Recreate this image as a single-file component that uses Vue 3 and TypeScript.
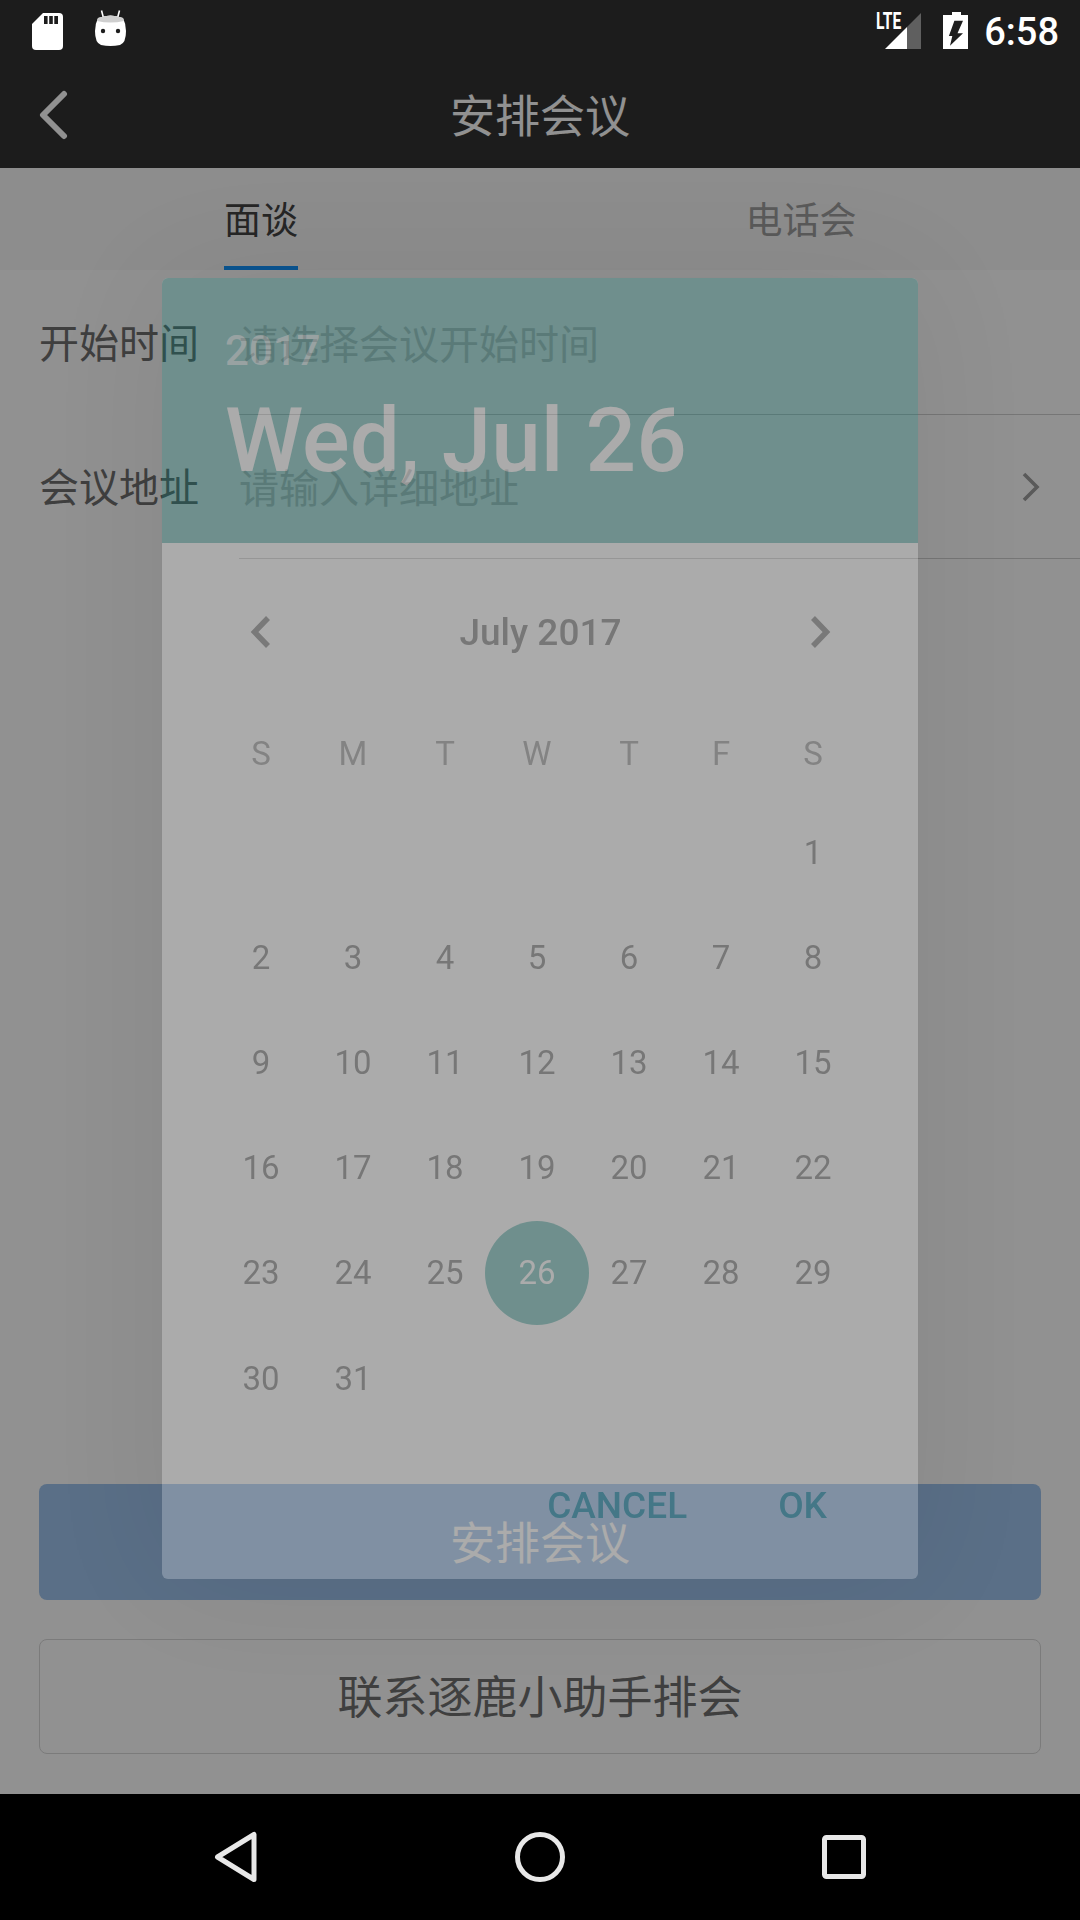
<script setup lang="ts">
const weekdays: string[] = ['S', 'M', 'T', 'W', 'T', 'F', 'S']
const blanks: number[] = [1, 2, 3, 4, 5, 6]
const days: number[] = Array.from({ length: 31 }, (_, i) => i + 1)
const selected = 26
</script>

<template>
  <div class="page">
    <div class="top">
      <div class="status">
        <svg class="sd" width="31" height="37" viewBox="0 0 31 37">
          <path d="M11 0H27a4 4 0 0 1 4 4V33a4 4 0 0 1-4 4H4a4 4 0 0 1-4-4V11Z" fill="#fff" />
          <path d="M12 3h3.6v8H12zM17.2 3h3.6v8h-3.6zM22.3 3h3.7v8h-3.7z" fill="#1d1d1d" />
        </svg>
        <svg class="droid" width="31" height="37" viewBox="0 0 31 37">
          <path d="M6.5 0.5L8.5 8M24.5 0.5L22.5 8" stroke="#fff" stroke-width="1.6" fill="none" />
          <path d="M3 8Q15.5 3 28 8Q31 14 31 21Q31 33 25 35Q15.5 37 6 35Q0 33 0 21Q0 14 3 8Z" fill="#fff" />
          <path d="M3 8Q15.5 3 28 8L29 11Q15.5 14 2 11Z" fill="#cfcfcf" />
          <circle cx="8" cy="21" r="2.2" fill="#1d1d1d" />
          <circle cx="23" cy="21" r="2.2" fill="#1d1d1d" />
        </svg>
        <div class="signal">
          <svg width="45" height="36" viewBox="0 0 45 36">
            <path d="M9 36L31 14V36Z" fill="#fff" />
            <path d="M31 14L45 0V36H31Z" fill="#5f5f5f" />
          </svg>
          <span class="lte">LTE</span>
        </div>
        <svg class="battery" width="25" height="37" viewBox="0 0 25 37">
          <path d="M9 0H18V3H25V37H0V3H9Z" fill="#fff" />
          <path d="M20 8.7L14.5 21.3H20L7 33.7L9.3 24H5.9L11.4 8.7Z" fill="#1d1d1d" />
        </svg>
        <span class="time">6:58</span>
      </div>
      <div class="toolbar">
        <svg class="back" width="30" height="50" viewBox="0 0 30 50">
          <path d="M26 4L5 25L26 46" fill="none" stroke="#fff" stroke-width="6" stroke-linecap="round" stroke-linejoin="round" />
        </svg>
        <span class="title">安排会议</span>
        <span></span>
      </div>
    </div>

    <div class="tabs">
      <div class="tab active"><span class="tab-label">面谈</span></div>
      <div class="tab"><span class="tab-label">电话会</span></div>
    </div>

    <main class="main">
      <div class="row">
        <span class="label">开始时间</span>
        <div class="field"><span class="placeholder">请选择会议开始时间</span></div>
      </div>
      <div class="row">
        <span class="label">会议地址</span>
        <div class="field">
          <span class="placeholder">请输入详细地址</span>
          <svg class="row-arrow" width="18" height="30" viewBox="0 0 18 30">
            <path d="M2 2L15 15L2 28" fill="none" stroke="#9e9e9e" stroke-width="3.6" />
          </svg>
        </div>
      </div>
      <div class="actions-main">
        <button class="btn primary"><span>安排会议</span></button>
        <button class="btn outline"><span>联系逐鹿小助手排会</span></button>
      </div>
    </main>

    <nav class="navbar">
      <div class="nav-cell">
        <svg width="44" height="52" viewBox="0 0 44 52">
          <path d="M40 3.5V48.5L3.5 26Z" fill="none" stroke="#e8e8e8" stroke-width="5" stroke-linejoin="round" />
        </svg>
      </div>
      <div class="nav-cell">
        <svg width="50" height="50" viewBox="0 0 50 50">
          <circle cx="25" cy="25" r="22.5" fill="none" stroke="#e8e8e8" stroke-width="5" />
        </svg>
      </div>
      <div class="nav-cell">
        <svg width="44" height="44" viewBox="0 0 44 44">
          <rect x="2.5" y="2.5" width="39" height="39" rx="2" fill="none" stroke="#e8e8e8" stroke-width="5" />
        </svg>
      </div>
    </nav>

    <div class="scrim"></div>

    <section class="dialog">
      <header class="d-head">
        <div class="year">2017</div>
        <div class="date">Wed, Jul 26</div>
      </header>
      <div class="month-row">
        <svg width="21" height="34" viewBox="0 0 21 34">
          <path d="M18 3L4.5 17L18 31" fill="none" stroke="#2a2a2a" stroke-width="5.5" />
        </svg>
        <span class="month">July 2017</span>
        <svg width="21" height="34" viewBox="0 0 21 34">
          <path d="M3 3L16.5 17L3 31" fill="none" stroke="#2a2a2a" stroke-width="5.5" />
        </svg>
      </div>
      <div class="weekdays">
        <span v-for="(d, i) in weekdays" :key="i">{{ d }}</span>
      </div>
      <div class="days">
        <span v-for="b in blanks" :key="'b' + b"></span>
        <span v-for="d in days" :key="d" class="day" :class="{ selected: d === selected }">{{ d }}</span>
      </div>
      <footer class="d-actions">
        <span>CANCEL</span>
        <span>OK</span>
      </footer>
    </section>
  </div>
</template>

<style scoped>
.page {
  position: relative;
  width: 1080px;
  height: 1920px;
  display: flex;
  flex-direction: column;
  overflow: hidden;
  background: #fff;
  font-family: "Noto Sans CJK SC", "Roboto", sans-serif;
}
.top {
  background: #323232;
  flex: none;
}
.status {
  position: relative;
  z-index: 2;
  height: 75px;
  display: flex;
  align-items: flex-start;
  padding: 0 21px 0 32px;
  box-sizing: border-box;
}
.sd { margin-top: 13px; }
.droid { margin: 10px 0 0 32px; }
.signal {
  position: relative;
  margin: 13px 0 0 auto;
  height: 36px;
}
.lte {
  position: absolute;
  left: 0;
  top: -3px;
  font: 700 23px/23px "Roboto", sans-serif;
  color: #fff;
  transform: scaleX(0.68);
  transform-origin: left top;
}
.battery { margin: 12px 0 0 22px; }
.time {
  margin: 9px 0 0 16px;
  font: 500 38px/46px "Roboto", sans-serif;
  color: #fff;
}
.toolbar {
  height: 93px;
  box-sizing: border-box;
  display: grid;
  grid-template-columns: 1fr auto 1fr;
  align-items: center;
  padding: 0 38px 16px;
}
.back { display: block; margin-top: 2px; }
.title {
  font-size: 45px;
  line-height: 60px;
  color: #fff;
}
.tabs {
  flex: none;
  height: 102px;
  display: grid;
  grid-template-columns: 540px 540px;
  background: #f8f8f8;
}
.tab {
  padding-right: 18px;
  display: flex;
  justify-content: center;
  color: #9e9e9e;
}
.tab-label {
  height: 102px;
  box-sizing: border-box;
  font-size: 37px;
  line-height: 50px;
  padding-top: 25px;
}
.tab.active { color: #444; }
.tab.active .tab-label { border-bottom: 4px solid #1295fd; }
.main {
  flex: 1;
  display: flex;
  flex-direction: column;
}
.row {
  display: flex;
  height: 144px;
  padding-left: 39px;
}
.label {
  width: 200px;
  flex: none;
  font-size: 40px;
  line-height: 142px;
  color: #6f6f6f;
}
.field {
  flex: 1;
  display: flex;
  align-items: center;
  justify-content: space-between;
  padding-right: 40px;
  border-bottom: 1.5px solid #cfcfcf;
  margin-bottom: -1px;
}
.placeholder {
  font-size: 40px;
  color: #d0d0d0;
}
.row-arrow { display: block; margin-top: 1px; }
.actions-main {
  margin-top: auto;
  padding: 0 39px 40px;
  display: flex;
  flex-direction: column;
  gap: 39px;
}
.btn {
  height: 116px;
  border-radius: 8px;
  font-family: inherit;
  font-size: 45px;
  padding: 0 0 4px;
}
.primary {
  border: none;
  background: #9ec3ed;
  color: #fff;
}
.outline {
  height: 115px;
  border: 1.5px solid #d8d8d8;
  background: transparent;
  color: #707070;
}
.navbar {
  flex: none;
  height: 126px;
  background: #000;
  display: flex;
  justify-content: center;
  align-items: center;
  position: relative;
  z-index: 2;
}
.nav-cell {
  width: 304px;
  display: flex;
  justify-content: center;
}
.nav-cell svg { display: block; }
.scrim {
  position: absolute;
  left: 0;
  top: 0;
  width: 1080px;
  height: 1794px;
  background: rgba(0, 0, 0, 0.43);
  z-index: 1;
}
.dialog {
  position: absolute;
  z-index: 1;
  left: 162px;
  top: 278px;
  width: 756px;
  height: 1301px;
  display: flex;
  flex-direction: column;
  background: #fff;
  border-radius: 6px;
  opacity: 0.236;
  box-shadow: 0 0 130px rgba(0, 0, 0, 0.3);
  font-family: "Roboto", sans-serif;
  color: #222;
}
.d-head {
  height: 265px;
  flex: none;
  box-sizing: border-box;
  background: #00897f;
  border-radius: 6px 6px 0 0;
  padding: 48px 0 0 63px;
  color: #fff;
}
.year {
  font-size: 42px;
  line-height: 50px;
  font-weight: 500;
  color: rgba(255, 255, 255, 0.7);
}
.date {
  margin-top: 12px;
  font-size: 89px;
  line-height: 106px;
  font-weight: 500;
}
.month-row {
  margin-top: 43px;
  height: 92px;
  flex: none;
  display: flex;
  align-items: center;
  justify-content: space-between;
  padding: 0 87px 0 88px;
}
.month {
  font-size: 37px;
  font-weight: 500;
}
.weekdays {
  margin: 28px 0 0 53px;
  height: 94px;
  flex: none;
  display: grid;
  grid-template-columns: repeat(7, 92px);
  align-items: center;
  justify-items: center;
  font-size: 33px;
  color: #555;
}
.days {
  margin-left: 53px;
  flex: none;
  display: grid;
  grid-template-columns: repeat(7, 92px);
  grid-auto-rows: 105.2px;
  align-items: center;
  justify-items: center;
  font-size: 33px;
}
.day {
  width: 104px;
  height: 104px;
  line-height: 104px;
  text-align: center;
  border-radius: 50%;
}
.selected {
  background: #00897f;
  color: #fff;
}
.d-actions {
  margin-top: auto;
  height: 148px;
  flex: none;
  display: flex;
  justify-content: flex-end;
  align-items: center;
  gap: 91px;
  padding-right: 91px;
  font-size: 37px;
  font-weight: 500;
  color: #009688;
}
</style>

<style>
html, body { margin: 0; background: #000; }
</style>
